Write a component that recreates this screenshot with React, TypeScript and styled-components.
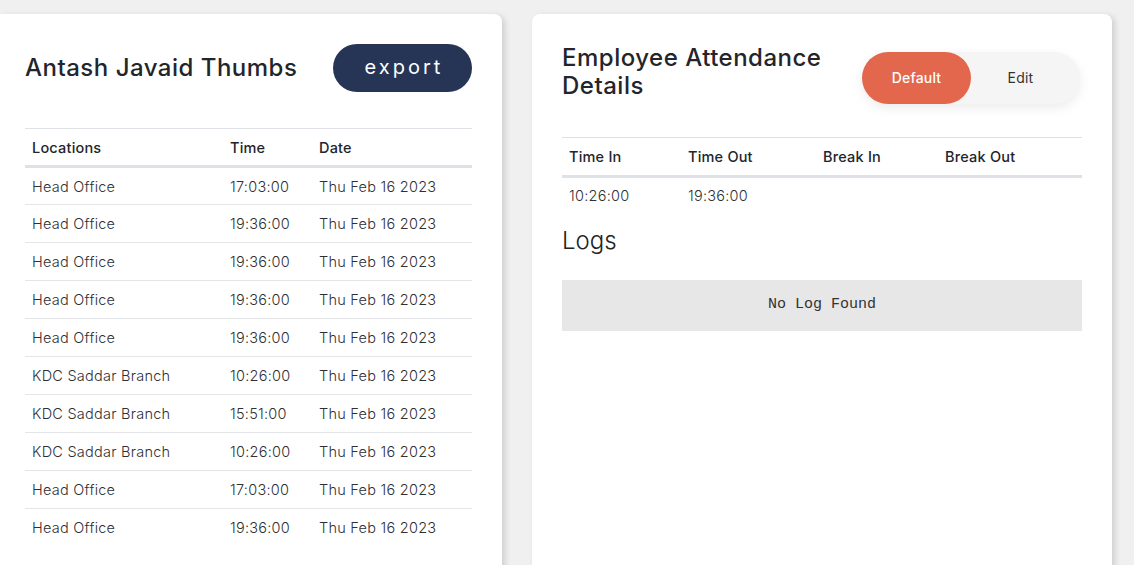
import React from "react";
import styled, { createGlobalStyle } from "styled-components";

const Global = createGlobalStyle`
  html, body { margin: 0; padding: 0; background: #f0f0f0; }
  body { font-family: Inter, "Open Sans", sans-serif; color: #212529; overflow: hidden; }
  * { box-sizing: border-box; }
`;

const Page = styled.div`
  display: flex;
  align-items: flex-start;
  gap: 30px;
  padding-top: 14px;
  height: 565px;
`;

const Card = styled.div<{ $w: number; $pl: number; $pr: number; $flatLeft?: boolean }>`
  width: ${(p) => p.$w}px;
  height: 600px;
  background: #fff;
  border-radius: ${(p) => (p.$flatLeft ? "0 8px 8px 0" : "8px")};
  box-shadow: 3px 2px 6px rgba(0, 0, 0, 0.14);
  padding: 30px ${(p) => p.$pr}px 0 ${(p) => p.$pl}px;
  flex-shrink: 0;
`;

const Header = styled.div<{ $align: string }>`
  display: flex;
  justify-content: space-between;
  align-items: ${(p) => p.$align};
`;

const Title = styled.h2<{ $w?: number }>`
  margin: 0;
  font-size: 24px;
  font-weight: 500;
  line-height: 28px;
  color: #23252b;
  letter-spacing: 0.5px;
  ${(p) => (p.$w ? `width: ${p.$w}px;` : "")}
`;

const ExportButton = styled.button`
  width: 139px;
  height: 48px;
  border: none;
  border-radius: 24px;
  background: #263555;
  color: #fff;
  font-family: Inter, sans-serif;
  font-size: 20px;
  letter-spacing: 3px;
  padding: 0 0 2px 3px;
`;

const Table = styled.table<{ $mt: number }>`
  width: 100%;
  border-collapse: collapse;
  margin-top: ${(p) => p.$mt}px;
  border-top: 1px solid #dee2e6;
`;

const Th = styled.th<{ $w?: number; $h: number }>`
  text-align: left;
  font-weight: 500;
  font-size: 14.5px;
  letter-spacing: 0.2px;
  color: #23252b;
  padding: 0 7px;
  height: ${(p) => p.$h}px;
  border-bottom: 3px solid #dee2e6;
  ${(p) => (p.$w ? `width: ${p.$w}px;` : "")}
`;

const Td = styled.td<{ $h: number; $line?: boolean }>`
  font-size: 14.5px;
  font-weight: 300;
  letter-spacing: 0.25px;
  color: #2e3034;
  padding: 0 7px;
  height: ${(p) => p.$h}px;
  border-bottom: ${(p) => (p.$line ? "1px solid #e3e5e8" : "none")};
  white-space: nowrap;
`;

const Toggle = styled.div`
  display: flex;
  align-items: center;
  width: 218px;
  height: 52px;
  margin-top: 8px;
  margin-right: 2px;
  border-radius: 26px;
  background: #f5f5f5;
  box-shadow: 0 4px 12px rgba(0, 0, 0, 0.08);
`;

const ToggleOption = styled.div<{ $active?: boolean }>`
  flex: ${(p) => (p.$active ? "0 0 109px" : "1")};
  height: 52px;
  border-radius: 26px;
  display: flex;
  align-items: center;
  justify-content: center;
  font-size: 14px;
  letter-spacing: 0.2px;
  background: ${(p) => (p.$active ? "#e2674c" : "transparent")};
  color: ${(p) => (p.$active ? "#fff" : "#333")};
  font-weight: ${(p) => (p.$active ? 500 : 400)};
  padding: 0 ${(p) => (p.$active ? 0 : 10)}px 1px 0;
`;

const LogsTitle = styled.h3`
  margin: 12px 0 0;
  font-size: 24px;
  font-weight: 300;
  line-height: 32px;
  color: #222;
`;

const EmptyBox = styled.div`
  margin-top: 23px;
  height: 51px;
  background: #e7e7e7;
  display: flex;
  align-items: center;
  justify-content: center;
  font-family: "Courier New", "Liberation Mono", monospace;
  font-weight: 400;
  font-size: 15px;
  color: #333;
  padding-bottom: 2px;
`;

const thumbs: [string, string][] = [
  ["Head Office", "17:03:00"],
  ["Head Office", "19:36:00"],
  ["Head Office", "19:36:00"],
  ["Head Office", "19:36:00"],
  ["Head Office", "19:36:00"],
  ["KDC Saddar Branch", "10:26:00"],
  ["KDC Saddar Branch", "15:51:00"],
  ["KDC Saddar Branch", "10:26:00"],
  ["Head Office", "17:03:00"],
  ["Head Office", "19:36:00"],
];

export default function App() {
  return (
    <>
      <Global />
      <Page>
        <Card $w={502} $pl={25} $pr={30} $flatLeft>
          <Header $align="center">
            <Title>Antash Javaid Thumbs</Title>
            <ExportButton>export</ExportButton>
          </Header>
          <Table $mt={36}>
            <thead>
              <tr>
                <Th $h={38} $w={198}>Locations</Th>
                <Th $h={38} $w={89}>Time</Th>
                <Th $h={38}>Date</Th>
              </tr>
            </thead>
            <tbody>
              {thumbs.map(([loc, t], i) => (
                <tr key={i}>
                  <Td $h={38} $line={i < thumbs.length - 1}>{loc}</Td>
                  <Td $h={38} $line={i < thumbs.length - 1}>{t}</Td>
                  <Td $h={38} $line={i < thumbs.length - 1}>Thu Feb 16 2023</Td>
                </tr>
              ))}
            </tbody>
          </Table>
        </Card>
        <Card $w={580} $pl={30} $pr={30}>
          <Header $align="flex-start">
            <Title $w={285}>Employee Attendance Details</Title>
            <Toggle>
              <ToggleOption $active>Default</ToggleOption>
              <ToggleOption>Edit</ToggleOption>
            </Toggle>
          </Header>
          <Table $mt={33}>
            <thead>
              <tr>
                <Th $h={39} $w={119}>Time In</Th>
                <Th $h={39} $w={135}>Time Out</Th>
                <Th $h={39} $w={122}>Break In</Th>
                <Th $h={39}>Break Out</Th>
              </tr>
            </thead>
            <tbody>
              <tr>
                <Td $h={36}>10:26:00</Td>
                <Td $h={36}>19:36:00</Td>
                <Td $h={36}></Td>
                <Td $h={36}></Td>
              </tr>
            </tbody>
          </Table>
          <LogsTitle>Logs</LogsTitle>
          <EmptyBox>No Log Found</EmptyBox>
        </Card>
      </Page>
    </>
  );
}
